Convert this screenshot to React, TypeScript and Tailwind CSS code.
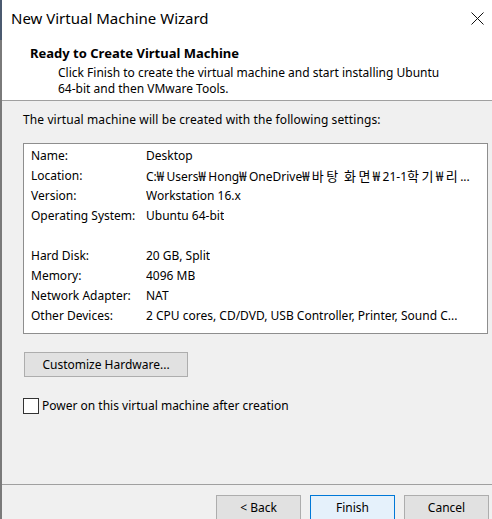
const rows: [string, string][] = [
  ["Name:", "Desktop"],
  ["Location:", "C:₩Users₩Hong₩OneDrive₩바탕 화면₩21-1학기₩리..."],
  ["Version:", "Workstation 16.x"],
  ["Operating System:", "Ubuntu 64-bit"],
  ["", ""],
  ["Hard Disk:", "20 GB, Split"],
  ["Memory:", "4096 MB"],
  ["Network Adapter:", "NAT"],
  ["Other Devices:", "2 CPU cores, CD/DVD, USB Controller, Printer, Sound C..."],
]

// Windows draws ₩ and hangul wider than Noto Sans does, so give them their own runs
function Value({ text }: { text: string }) {
  const parts = text.split(/([₩\uAC00-\uD7A3]+)/)
  return (
    <span className="overflow-hidden">
      {parts.map((p, i) =>
        /[₩\uAC00-\uD7A3]/.test(p) ? (
          <span key={i} className="text-[13px] tracking-[2.5px]" style={{ fontFamily: '"Noto Sans CJK KR", sans-serif' }}>
            {p}
          </span>
        ) : (
          <span key={i}>{p}</span>
        )
      )}
    </span>
  )
}

function WizardButton({ label, primary }: { label: string; primary?: boolean }) {
  return (
    <button
      className={
        "w-[85px] h-[25px] shrink-0 border text-[12px] leading-none text-black " +
        (primary ? "border-[#0078d7] bg-[#e5f1fb]" : "border-[#adadad] bg-[#e1e1e1]")
      }
    >
      {label}
    </button>
  )
}

export default function App() {
  return (
    <div
      className="flex w-[492px] h-[519px] overflow-hidden bg-[#f0f0f0] text-black"
      style={{ fontFamily: '"Segoe UI", "Noto Sans", "Noto Sans CJK KR", sans-serif' }}
    >
      {/* window edge */}
      <div className="flex flex-col w-[2px] shrink-0">
        <div className="h-[40px] bg-[#4b5a70]" />
        <div className="flex-1 bg-[#7a7a7a]" />
      </div>

      <div className="flex flex-col flex-1 min-w-0">
        {/* title + header */}
        <div className="bg-white">
          <div className="flex items-center justify-between h-[36px] pl-[9px] pr-[7px]">
            <span className="text-[15px] leading-none">New Virtual Machine Wizard</span>
            <svg width="13" height="13" viewBox="0 0 13 13" className="mr-[1px]" fill="none" stroke="#111" strokeWidth="1">
              <path d="M0.5 0.5 L12.5 12.5 M12.5 0.5 L0.5 12.5" />
            </svg>
          </div>
          <div className="pt-[9px] pb-[3px]">
            <h1 className="pl-[28px] text-[13px] font-bold leading-[16px]">Ready to Create Virtual Machine</h1>
            <p className="pl-[56px] pr-[40px] mt-[4px] text-[12px] leading-[16px]">
              Click Finish to create the virtual machine and start installing Ubuntu 64-bit and then VMware Tools.
            </p>
          </div>
        </div>
        <div className="h-px bg-[#a0a0a0]" />

        {/* body */}
        <div className="flex flex-col flex-1 pt-[11px] pl-[21px] pr-[4px]">
          <p className="text-[12px] leading-[16px] tracking-[0.1px]">The virtual machine will be created with the following settings:</p>

          <div className="mt-[15px] h-[191px] border border-[#8e8e8e] bg-white pt-[2px] pl-[7px] pr-[8px]">
            {rows.map(([k, v], i) => (
              <div key={i} className="flex h-[20px] items-center text-[12px] whitespace-nowrap">
                <span className="w-[115px] shrink-0">{k}</span>
                <Value text={v} />
              </div>
            ))}
          </div>

          <button className="mt-[18px] ml-[1px] w-[164px] h-[25px] border border-[#adadad] bg-[#e1e1e1] text-[12px] leading-none">
            Customize Hardware...
          </button>

          <label className="flex items-center mt-[20px] gap-[3px] text-[12px]">
            <span className="w-[16px] h-[16px] border border-[#333] bg-white shrink-0" />
            <span>Power on this virtual machine after creation</span>
          </label>
        </div>

        {/* footer */}
        <div className="h-px bg-[#a0a0a0]" />
        <div className="flex justify-end gap-[9px] h-[34px] pt-[10px] pr-[3px]">
          <WizardButton label="< Back" />
          <WizardButton label="Finish" primary />
          <WizardButton label="Cancel" />
        </div>
      </div>
    </div>
  )
}
